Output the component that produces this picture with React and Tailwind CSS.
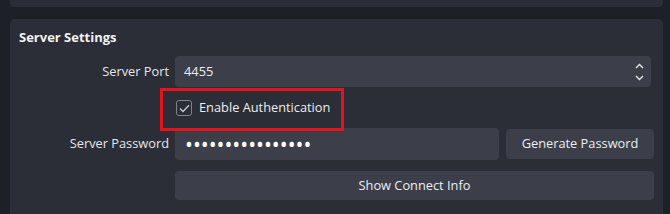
import React from 'react';

function Chevron({ up }) {
  return (
    <svg width="9" height="6" viewBox="0 0 9 6" fill="none" className="block">
      <path
        d={up ? 'M1 5 L4.5 1.5 L8 5' : 'M1 1 L4.5 4.5 L8 1'}
        stroke="#e4e6ea"
        strokeWidth="1.4"
      />
    </svg>
  );
}

function Label({ children }) {
  return (
    <div className="w-[150px] shrink-0 text-right text-[12.8px] text-[#e6e7ea]">
      {children}
    </div>
  );
}

export default function App() {
  return (
    <div
      className="relative w-[670px] h-[214px] overflow-hidden bg-[#1e2028]"
      style={{ fontFamily: '"Open Sans", "Liberation Sans", sans-serif' }}
    >
      <div className="ml-[10px] w-[653px] h-[7px] rounded-b-[4px] bg-[#2b2d37]" />

      <div className="ml-[10px] mt-[12px] w-[653px] h-[220px] rounded-t-[5px] bg-[#2b2d37] pl-[9px] pt-[9px]">
        <div className="h-[18px] leading-[18px] text-[13px] font-bold text-[#f2f3f5]">
          Server Settings
        </div>

        <div className="mt-[10px] flex items-center gap-[6px]">
          <Label>Server Port</Label>
          <div className="w-[476px] h-[31px] rounded-[4px] bg-[#3c3f4a] flex items-center justify-between pl-[9px] pr-[7px]">
            <span className="text-[12.8px] text-[#eceef1]">4455</span>
            <div className="flex flex-col gap-[6px]">
              <Chevron up />
              <Chevron />
            </div>
          </div>
        </div>

        <div className="mt-[13px] flex items-center gap-[6px] h-[16px]">
          <div className="w-[150px] shrink-0" />
          <div className="ml-[1px] w-[16px] h-[16px] rounded-[3px] border border-[#80838b] flex items-center justify-center">
            <svg width="11" height="9" viewBox="0 0 11 9" fill="none">
              <path d="M1 4.5 L4 7.5 L10 1.2" stroke="#c9cbd0" strokeWidth="1.3" />
            </svg>
          </div>
          <span className="ml-[1px] text-[12.8px] text-[#eceef1]">Enable Authentication</span>
        </div>

        <div className="mt-[12px] flex items-center gap-[6px]">
          <Label>Server Password</Label>
          <div className="w-[324px] h-[32px] rounded-[4px] bg-[#3c3f4a] flex items-center pl-[10px]">
            <span className="text-[21px] leading-none tracking-[0px] text-white">
              ••••••••••••••••
            </span>
          </div>
          <button className="ml-[1px] w-[148px] h-[30px] rounded-[4px] bg-[#3c3f4a] text-[12.8px] text-[#eceef1]">
            Generate Password
          </button>
        </div>

        <div className="mt-[11px] flex items-center gap-[6px]">
          <div className="w-[150px] shrink-0" />
          <button className="w-[479px] h-[29px] rounded-[4px] bg-[#3c3f4a] text-[12.8px] text-[#eceef1]">
            Show Connect Info
          </button>
        </div>
      </div>

      <div className="absolute left-[160px] top-[88px] w-[184px] h-[43px] border-[3px] border-[#e3141b]" />
    </div>
  );
}
